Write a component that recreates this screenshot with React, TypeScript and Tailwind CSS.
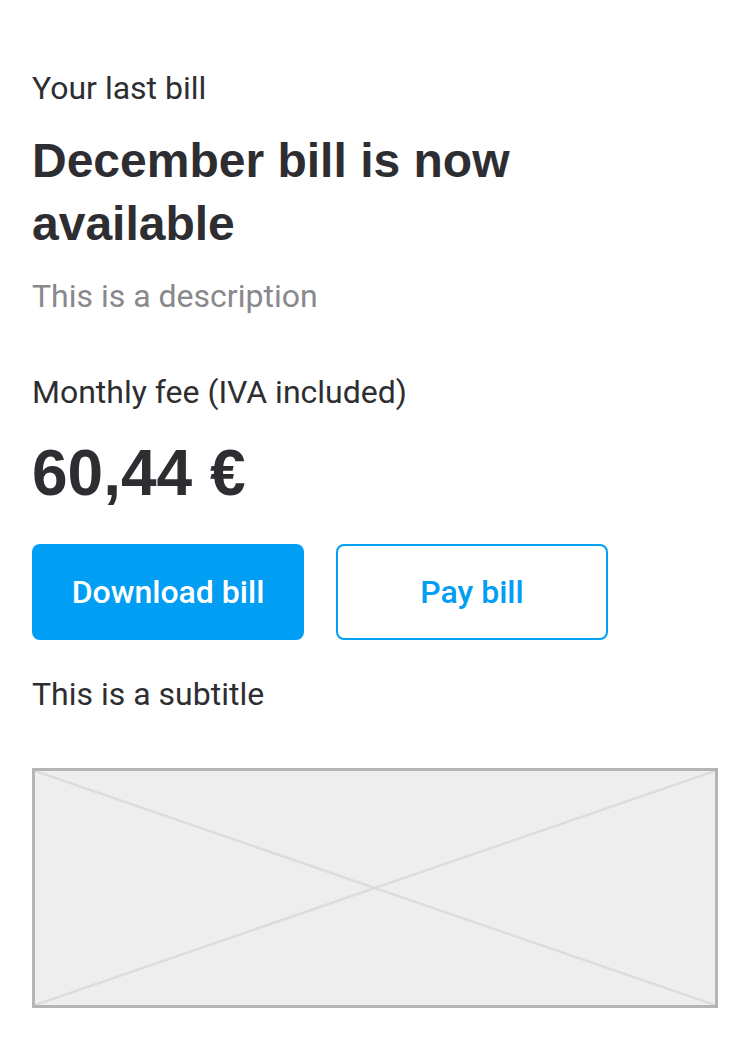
export default function App() {
  return (
    <div className="min-h-[1056px] bg-white px-8 pt-[68px] font-['Roboto','Liberation_Sans',sans-serif] text-[#2e2e32]">
      <p className="text-[32px] leading-[40px]">Your last bill</p>
      <h1 className="mt-[21px] font-['Liberation_Sans',Arial,sans-serif] text-[48px] font-bold leading-[63px] max-w-[560px]">
        December bill is now available
      </h1>
      <p className="mt-[21px] text-[32px] leading-[40px] text-[#88888d]">This is a description</p>

      <p className="mt-[56px] text-[32px] leading-[40px]">Monthly fee (IVA included)</p>
      <p className="mt-[23px] font-['Liberation_Sans',Arial,sans-serif] text-[64px] font-bold leading-[76px]">
        60,44 €
      </p>

      <div className="mt-[33px] flex gap-8">
        <button className="h-[96px] w-[272px] rounded-lg bg-[#019ef4] text-[32px] font-medium text-white">
          Download bill
        </button>
        <button className="h-[96px] w-[272px] rounded-lg border-2 border-[#019ef4] bg-white text-[32px] font-medium text-[#019ef4]">
          Pay bill
        </button>
      </div>

      <p className="mt-[34px] text-[32px] leading-[40px]">This is a subtitle</p>

      <div className="mt-[54px] h-[240px] w-full border-[3px] border-[#b5b5b5] bg-[#eeeeee]">
        <svg className="h-full w-full" viewBox="0 0 100 100" preserveAspectRatio="none">
          <line x1="0" y1="0" x2="100" y2="100" stroke="#dcdcdc" strokeWidth="2.5" vectorEffect="non-scaling-stroke" />
          <line x1="100" y1="0" x2="0" y2="100" stroke="#dcdcdc" strokeWidth="2.5" vectorEffect="non-scaling-stroke" />
        </svg>
      </div>
    </div>
  );
}
